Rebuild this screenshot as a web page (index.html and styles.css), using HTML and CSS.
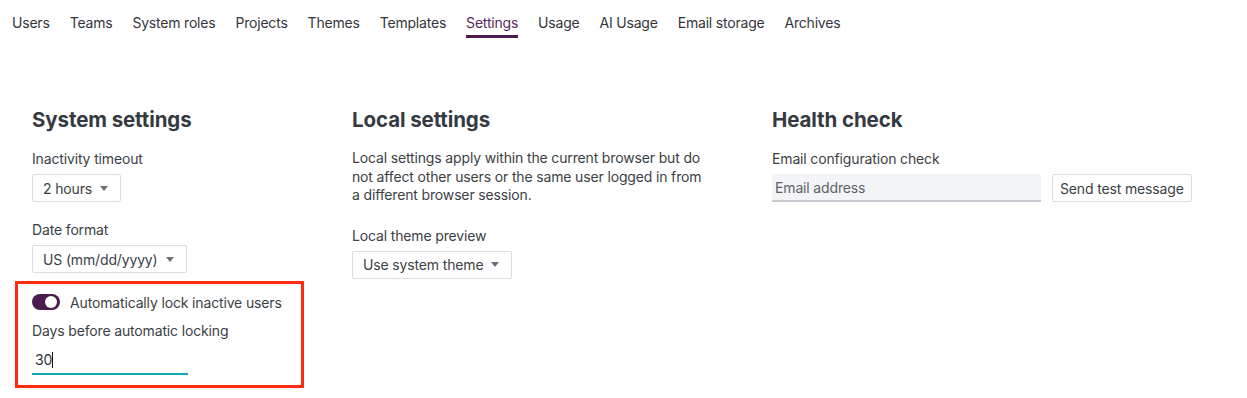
FILE: index.html
```html
<!DOCTYPE html>
<html>
<head>
<meta charset="utf-8">
<link rel="stylesheet" href="styles.css">
</head>
<body>
<nav class="tabs">
  <a class="tab">Users</a>
  <a class="tab">Teams</a>
  <a class="tab">System roles</a>
  <a class="tab">Projects</a>
  <a class="tab">Themes</a>
  <a class="tab">Templates</a>
  <a class="tab active">Settings</a>
  <a class="tab">Usage</a>
  <a class="tab">AI Usage</a>
  <a class="tab">Email storage</a>
  <a class="tab">Archives</a>
</nav>
<main class="grid">
  <section class="col col-system">
    <h2>System settings</h2>
    <div class="field">
      <label class="label">Inactivity timeout</label>
      <div class="select">2 hours <span class="caret"></span></div>
    </div>
    <div class="field">
      <label class="label">Date format</label>
      <div class="select">US (mm/dd/yyyy) <span class="caret"></span></div>
    </div>
    <div class="lock-group">
      <div class="highlight"></div>
      <div class="toggle-row">
        <span class="toggle"><span class="knob"></span></span>
        <span>Automatically lock inactive users</span>
      </div>
      <label class="label">Days before automatic locking</label>
      <div class="num-input">30<span class="cursor"></span></div>
    </div>
  </section>
  <section class="col col-local">
    <h2>Local settings</h2>
    <p class="desc">Local settings apply within the current browser but do not affect other users or the same user logged in from a different browser session.</p>
    <div class="field">
      <label class="label">Local theme preview</label>
      <div class="select">Use system theme <span class="caret"></span></div>
    </div>
  </section>
  <section class="col col-health">
    <h2>Health check</h2>
    <div class="field">
      <label class="label">Email configuration check</label>
      <div class="email-row">
        <div class="email-input">Email address</div>
        <button class="btn">Send test message</button>
      </div>
    </div>
  </section>
</main>
</body>
</html>
```
FILE: styles.css
```css
* { box-sizing: border-box; }
html, body { margin: 0; padding: 0; background: #fff; }
body {
  font-family: Inter, "Liberation Sans", sans-serif;
  font-size: 14px;
  color: #3b3f45;
  letter-spacing: -0.15px;
  min-height: 398px;
}
.tabs {
  display: flex;
  gap: 20px;
  padding: 13px 0 0 12px;
  height: 40px;
}
.tab {
  color: #33363b;
  font-size: 14px;
  line-height: 20px;
  height: 25px;
  border-bottom: 3px solid transparent;
  letter-spacing: -0.2px;
}
.tab.active {
  color: #5a2a5c;
  border-bottom-color: #4c1c4f;
}
.grid {
  display: grid;
  grid-template-columns: 320px 420px 1fr;
  padding: 67px 0 30px 32px;
}
h2 {
  margin: 0 0 16px;
  font-size: 20.5px;
  line-height: 26px;
  font-weight: 700;
  color: #353a42;
  letter-spacing: -0.1px;
}
.label {
  display: block;
  line-height: 20px;
  margin-bottom: 5px;
  color: #3b3f45;
}
.field { margin-bottom: 18px; }
.select {
  display: flex;
  width: fit-content;
  align-items: center;
  height: 28px;
  padding: 0 12px 0 10px;
  border: 1px solid #dcdee1;
  border-radius: 2px;
  color: #3b3f45;
  background: #fff;
  gap: 8px;
}
.caret {
  display: inline-block;
  width: 0; height: 0;
  border-left: 4.5px solid transparent;
  border-right: 4.5px solid transparent;
  border-top: 5px solid #6b7078;
}
.lock-group {
  position: relative;
  padding-top: 2px;
}
.highlight {
  position: absolute;
  left: -17px; top: -10px;
  width: 289px; height: 107px;
  border: 3px solid #ff2a0f;
  pointer-events: none;
}
.toggle-row {
  display: flex;
  align-items: center;
  gap: 10px;
  height: 18px;
  margin-bottom: 10px;
}
.toggle {
  position: relative;
  width: 28px; height: 16px;
  border-radius: 8px;
  background: #4c1c4f;
  display: inline-block;
}
.knob {
  position: absolute;
  right: 3px; top: 2px;
  width: 12px; height: 12px;
  border-radius: 50%;
  background: #fff;
}
.num-input {
  width: 156px;
  height: 29px;
  padding: 5px 0 0 3px;
  border-bottom: 2px solid #13a6b6;
  color: #2d3035;
  line-height: 18px;
}
.cursor {
  display: inline-block;
  width: 1px; height: 16px;
  background: #111;
  vertical-align: -3px;
}
.desc {
  margin: 3px 0 21px;
  width: 360px;
  line-height: 18.5px;
}
.email-row { display: flex; gap: 11px; }
.email-input {
  width: 269px;
  height: 28px;
  background: #f3f4f6;
  border-bottom: 2px solid #c5c8cc;
  padding: 5px 3px 0;
  color: #5d626a;
  line-height: 18px;
}
.btn {
  font: inherit;
  letter-spacing: inherit;
  color: #3b3f45;
  background: #fff;
  border: 1px solid #dcdee1;
  border-radius: 2px;
  height: 28px;
  padding: 0 7px;
}
```
